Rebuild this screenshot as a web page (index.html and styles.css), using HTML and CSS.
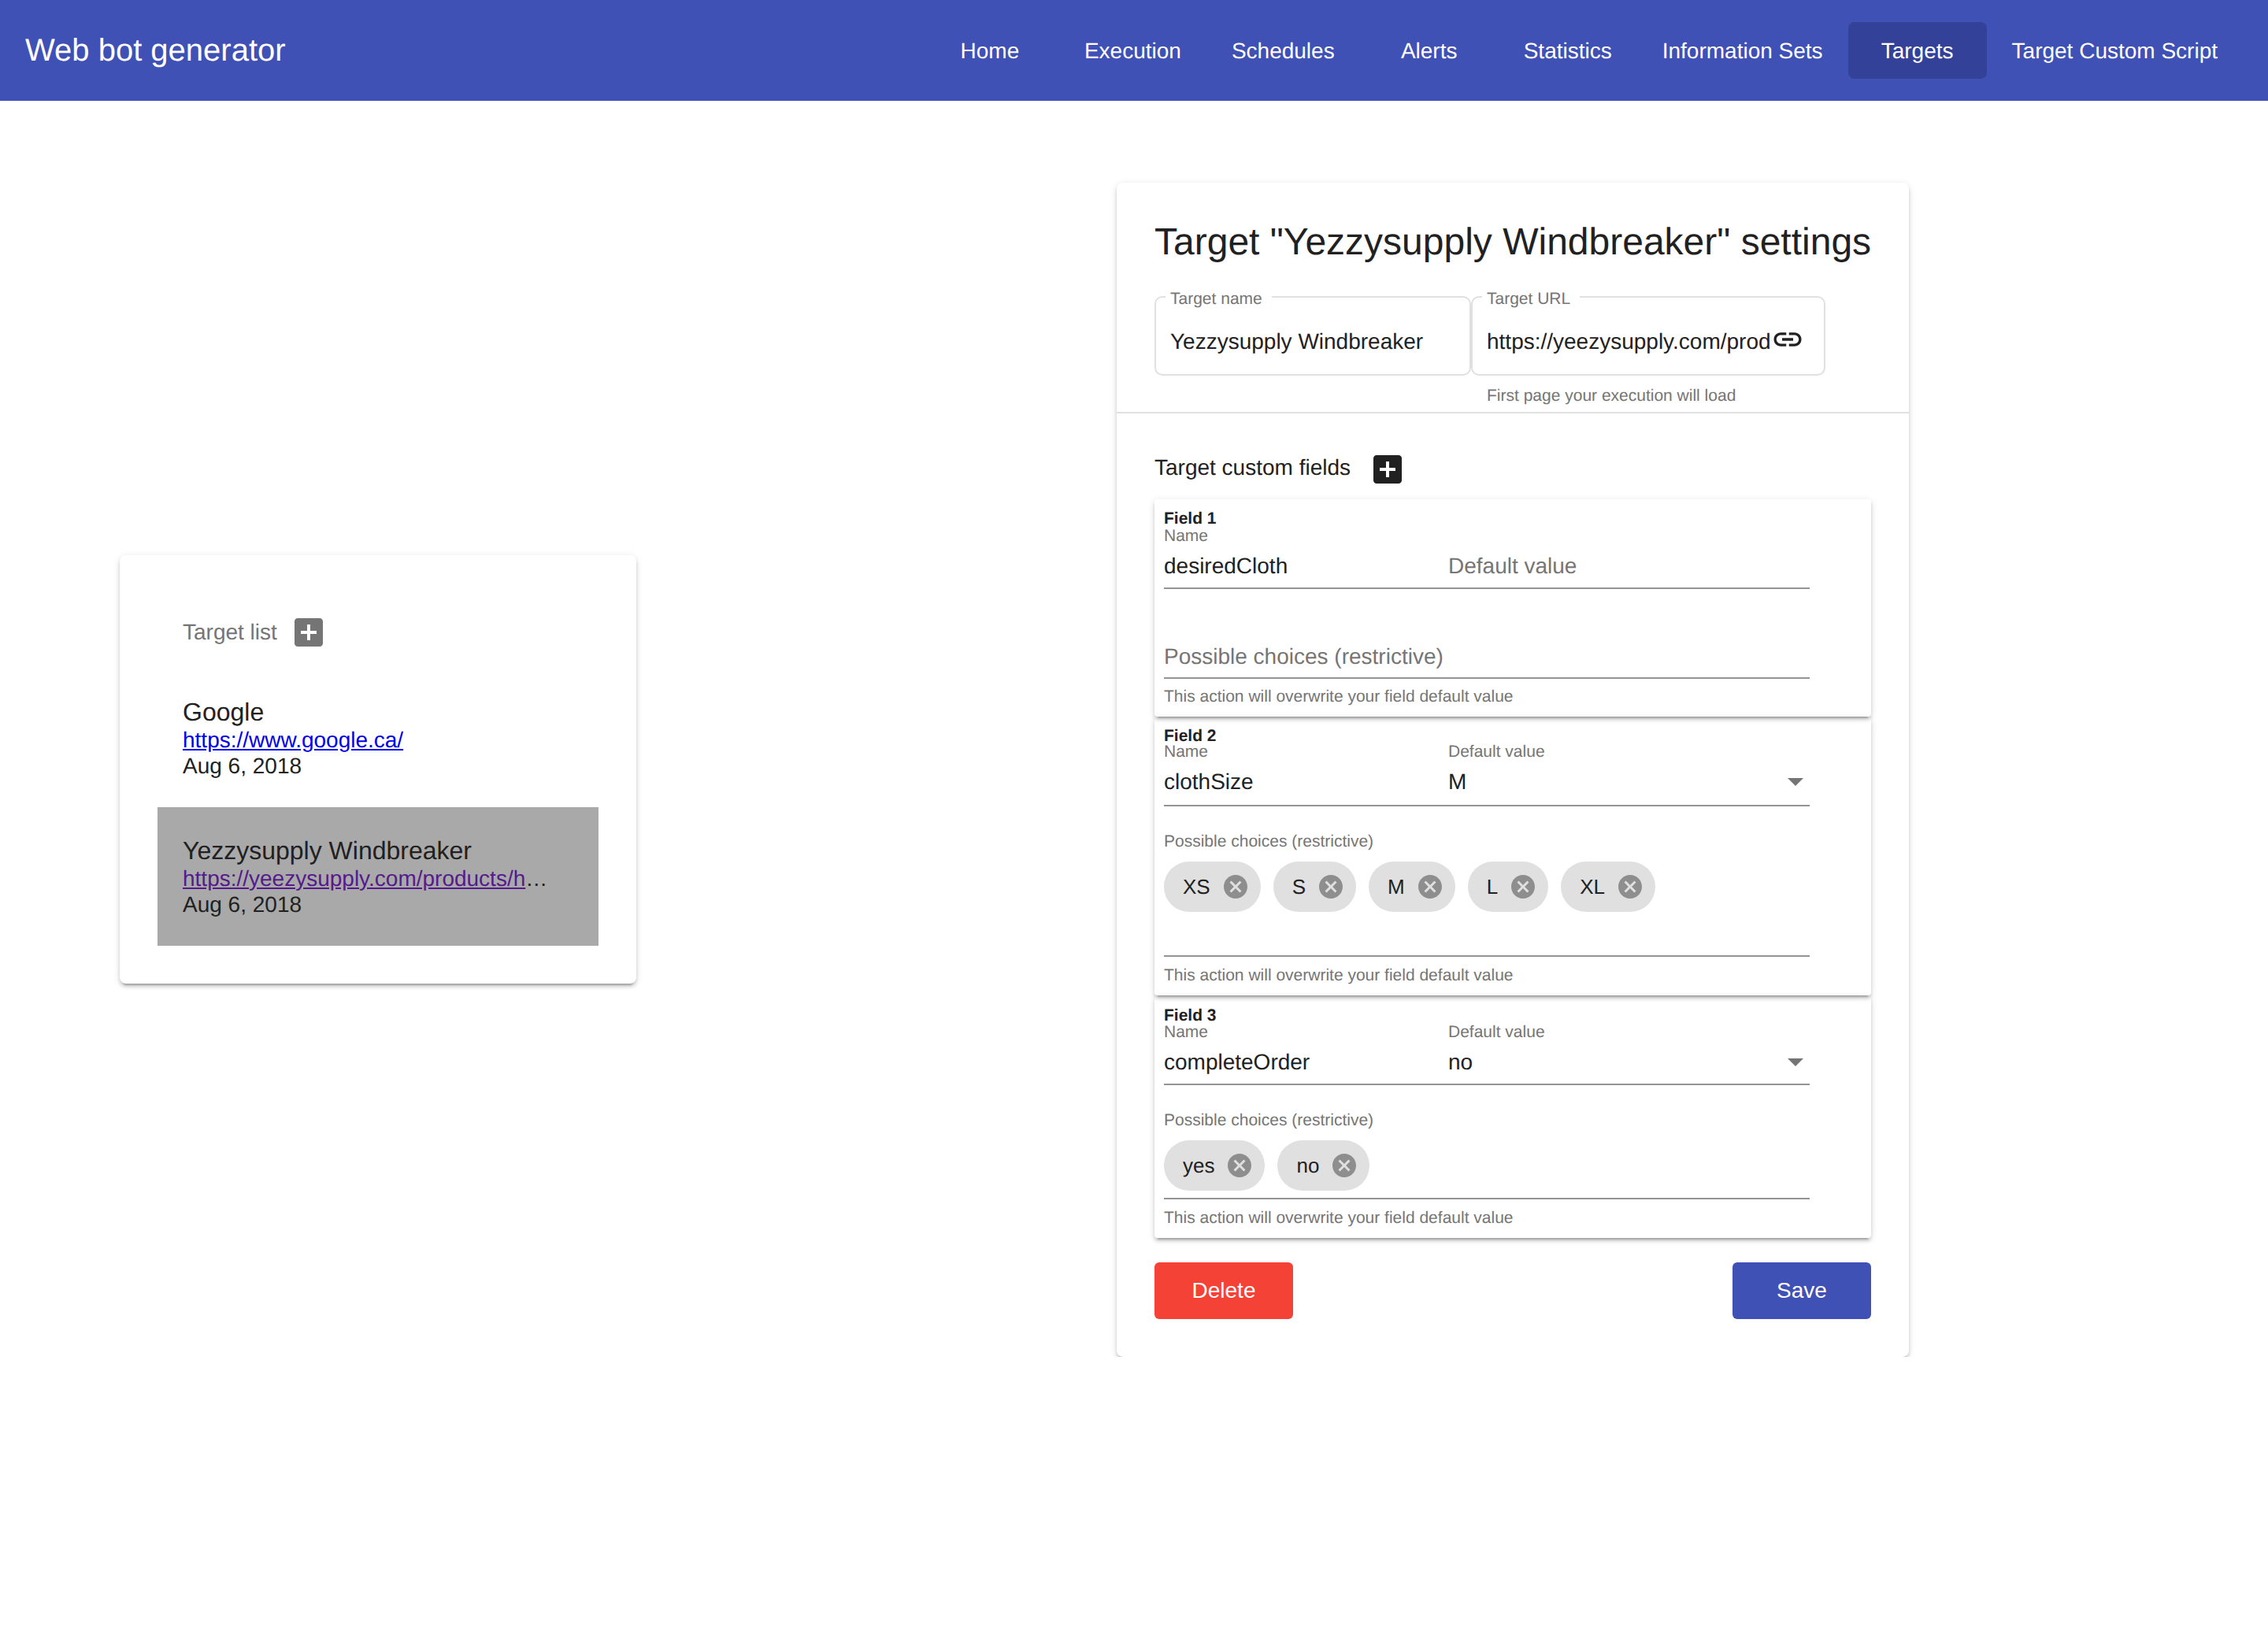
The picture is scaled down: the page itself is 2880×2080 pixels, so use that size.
FILE: index.html
```html
<!DOCTYPE html>
<html>
<head>
	<meta charset="utf-8">
	<title>Web bot generator</title>
	<link rel="stylesheet" href="styles.css">
</head>
<body>

	<header class="toolbar">
		<span class="brand">Web bot generator</span>
		<nav class="nav">
			<a class="nav-btn">Home</a>
			<a class="nav-btn">Execution</a>
			<a class="nav-btn">Schedules</a>
			<a class="nav-btn">Alerts</a>
			<a class="nav-btn">Statistics</a>
			<a class="nav-btn">Information Sets</a>
			<a class="nav-btn active">Targets</a>
			<a class="nav-btn">Target Custom Script</a>
		</nav>
	</header>

	<main class="content">

		<div class="col-list">
			<section class="card list-card">
				<div class="list-head">
					<span class="list-title">Target list</span>
					<svg class="add-icon gray" viewBox="0 0 24 24"><path d="M19 3H5c-1.11 0-2 .9-2 2v14c0 1.1.89 2 2 2h14c1.1 0 2-.9 2-2V5c0-1.1-.9-2-2-2zm-2 10h-4v4h-2v-4H7v-2h4V7h2v4h4v2z"/></svg>
				</div>
				<div class="list-item">
					<div class="item-name">Google</div>
					<div class="item-line"><a class="link" href="#">https://www.google.ca/</a></div>
					<div class="item-date">Aug 6, 2018</div>
				</div>
				<div class="list-item selected">
					<div class="item-name">Yezzysupply Windbreaker</div>
					<div class="item-line"><a class="link visited" href="#">https://yeezysupply.com/products/hooded-windbreaker</a></div>
					<div class="item-date">Aug 6, 2018</div>
				</div>
			</section>
		</div>

		<div class="col-settings">
			<section class="card settings-card">
				<h1 class="settings-title">Target "Yezzysupply Windbreaker" settings</h1>

				<div class="outline-row">
					<div class="outline-wrap name-wrap">
						<div class="outline">
							<label class="outline-label">Target name</label>
							<div class="outline-value">Yezzysupply Windbreaker</div>
						</div>
					</div>
					<div class="outline-wrap url-wrap">
						<div class="outline">
							<label class="outline-label">Target URL</label>
							<div class="outline-value url-value">https://yeezysupply.com/products/hooded-windbreaker</div>
							<svg class="link-icon" viewBox="0 0 24 24"><path d="M3.9 12c0-1.71 1.39-3.1 3.1-3.1h4V7H7c-2.76 0-5 2.24-5 5s2.24 5 5 5h4v-1.9H7c-1.71 0-3.1-1.39-3.1-3.1zM8 13h8v-2H8v2zm9-6h-4v1.9h4c1.71 0 3.1 1.39 3.1 3.1s-1.39 3.1-3.1 3.1h-4V17h4c2.76 0 5-2.24 5-5s-2.24-5-5-5z"/></svg>
						</div>
						<div class="outline-hint">First page your execution will load</div>
					</div>
				</div>

				<hr class="divider">

				<div class="fields-head">
					<span class="fields-title">Target custom fields</span>
					<svg class="add-icon" viewBox="0 0 24 24"><path d="M19 3H5c-1.11 0-2 .9-2 2v14c0 1.1.89 2 2 2h14c1.1 0 2-.9 2-2V5c0-1.1-.9-2-2-2zm-2 10h-4v4h-2v-4H7v-2h4V7h2v4h4v2z"/></svg>
				</div>

				<div class="field field-first">
					<div class="field-title">Field 1</div>
					<div class="field-row">
						<div class="col-name">
							<div class="small-label">Name</div>
							<div class="value">desiredCloth</div>
						</div>
						<div class="col-default">
							<div class="small-label"></div>
							<div class="value placeholder">Default value</div>
						</div>
					</div>
					<div class="choices-empty placeholder">Possible choices (restrictive)</div>
					<div class="hint">This action will overwrite your field default value</div>
				</div>

				<div class="field">
					<div class="field-title">Field 2</div>
					<div class="field-row">
						<div class="col-name">
							<div class="small-label">Name</div>
							<div class="value">clothSize</div>
						</div>
						<div class="col-default">
							<div class="small-label">Default value</div>
							<div class="value select">M<span class="arrow"></span></div>
						</div>
					</div>
					<div class="choices-label">Possible choices (restrictive)</div>
					<div class="chips tall">
						<span class="chip">XS<svg class="chip-x" viewBox="0 0 24 24"><path d="M12 2C6.47 2 2 6.47 2 12s4.47 10 10 10 10-4.47 10-10S17.53 2 12 2zm5 13.59L15.59 17 12 13.41 8.41 17 7 15.59 10.59 12 7 8.41 8.41 7 12 10.59 15.59 7 17 8.41 13.41 12 17 15.59z"/></svg></span>
						<span class="chip">S<svg class="chip-x" viewBox="0 0 24 24"><path d="M12 2C6.47 2 2 6.47 2 12s4.47 10 10 10 10-4.47 10-10S17.53 2 12 2zm5 13.59L15.59 17 12 13.41 8.41 17 7 15.59 10.59 12 7 8.41 8.41 7 12 10.59 15.59 7 17 8.41 13.41 12 17 15.59z"/></svg></span>
						<span class="chip">M<svg class="chip-x" viewBox="0 0 24 24"><path d="M12 2C6.47 2 2 6.47 2 12s4.47 10 10 10 10-4.47 10-10S17.53 2 12 2zm5 13.59L15.59 17 12 13.41 8.41 17 7 15.59 10.59 12 7 8.41 8.41 7 12 10.59 15.59 7 17 8.41 13.41 12 17 15.59z"/></svg></span>
						<span class="chip">L<svg class="chip-x" viewBox="0 0 24 24"><path d="M12 2C6.47 2 2 6.47 2 12s4.47 10 10 10 10-4.47 10-10S17.53 2 12 2zm5 13.59L15.59 17 12 13.41 8.41 17 7 15.59 10.59 12 7 8.41 8.41 7 12 10.59 15.59 7 17 8.41 13.41 12 17 15.59z"/></svg></span>
						<span class="chip">XL<svg class="chip-x" viewBox="0 0 24 24"><path d="M12 2C6.47 2 2 6.47 2 12s4.47 10 10 10 10-4.47 10-10S17.53 2 12 2zm5 13.59L15.59 17 12 13.41 8.41 17 7 15.59 10.59 12 7 8.41 8.41 7 12 10.59 15.59 7 17 8.41 13.41 12 17 15.59z"/></svg></span>
					</div>
					<div class="hint">This action will overwrite your field default value</div>
				</div>

				<div class="field field-last">
					<div class="field-title">Field 3</div>
					<div class="field-row">
						<div class="col-name">
							<div class="small-label">Name</div>
							<div class="value">completeOrder</div>
						</div>
						<div class="col-default">
							<div class="small-label">Default value</div>
							<div class="value select">no<span class="arrow"></span></div>
						</div>
					</div>
					<div class="choices-label">Possible choices (restrictive)</div>
					<div class="chips">
						<span class="chip">yes<svg class="chip-x" viewBox="0 0 24 24"><path d="M12 2C6.47 2 2 6.47 2 12s4.47 10 10 10 10-4.47 10-10S17.53 2 12 2zm5 13.59L15.59 17 12 13.41 8.41 17 7 15.59 10.59 12 7 8.41 8.41 7 12 10.59 15.59 7 17 8.41 13.41 12 17 15.59z"/></svg></span>
						<span class="chip">no<svg class="chip-x" viewBox="0 0 24 24"><path d="M12 2C6.47 2 2 6.47 2 12s4.47 10 10 10 10-4.47 10-10S17.53 2 12 2zm5 13.59L15.59 17 12 13.41 8.41 17 7 15.59 10.59 12 7 8.41 8.41 7 12 10.59 15.59 7 17 8.41 13.41 12 17 15.59z"/></svg></span>
					</div>
					<div class="hint">This action will overwrite your field default value</div>
				</div>

				<div class="actions">
					<button class="btn btn-delete">Delete</button>
					<button class="btn btn-save">Save</button>
				</div>
			</section>
		</div>

	</main>

</body>
</html>
```

FILE: styles.css
```css
* {
	box-sizing: border-box;
}

body {
	margin: 0;
	background-color: #fff;
	color: #212121;
	font-family: "Liberation Sans", Arial, sans-serif;
	font-size: 28px;
	text-rendering: geometricPrecision;
}

/* toolbar */
.toolbar {
	display: flex;
	align-items: center;
	justify-content: space-between;
	height: 128px;
	padding: 0 32px;
	background-color: #3f51b5;
	color: #fff;
}

.brand {
	padding-top: 1px;
	font-size: 40px;
}

.nav {
	display: flex;
}

.nav-btn {
	min-width: 176px;
	height: 72px;
	padding: 0 32px;
	border-radius: 8px;
	font-size: 28px;
	line-height: 74px;
	text-align: center;
	white-space: nowrap;
}

.nav-btn.active {
	background-color: #344198;
}

/* page columns */
.content {
	display: grid;
	grid-template-columns: 1fr 2fr;
	align-items: center;
	padding-top: 104px;
}

.col-list,
.col-settings {
	display: flex;
	justify-content: center;
}

.col-list {
	padding-bottom: 2px;
}

.col-settings {
	padding-left: 2px;
}

.card {
	background-color: #fff;
	border-radius: 8px;
	padding: 48px;
	box-shadow: 0 6px 2px -4px rgba(0, 0, 0, .2), 0 4px 4px 0 rgba(0, 0, 0, .14), 0 2px 10px 0 rgba(0, 0, 0, .12);
}

/* target list */
.list-card {
	width: 656px;
}

.list-head {
	display: flex;
	align-items: center;
	gap: 16px;
	height: 96px;
	padding: 5px 0 0 32px;
}

.list-title {
	color: #757575;
}

.add-icon {
	width: 48px;
	height: 48px;
	fill: #212121;
}

.add-icon.gray {
	fill: #757575;
}

.list-item {
	display: flex;
	flex-direction: column;
	justify-content: center;
	height: 176px;
	padding: 0 32px;
}

.list-item.selected {
	background-color: #a9a9a9;
}

.item-name {
	font-size: 32px;
	line-height: 38px;
}

.item-line {
	max-width: 470px;
	line-height: 34px;
	overflow: hidden;
	white-space: nowrap;
	text-overflow: ellipsis;
}

.item-date {
	line-height: 32px;
}

.link {
	color: #0000ee;
}

.link.visited {
	color: #551a8b;
}

/* settings */
.settings-card {
	width: 1006px;
}

.settings-title {
	margin: 0 0 40px;
	font-size: 48px;
	font-weight: normal;
	line-height: 56px;
	white-space: nowrap;
}

.outline-row {
	display: flex;
}

.name-wrap {
	width: 402px;
}

.url-wrap {
	width: 450px;
}

.outline {
	position: relative;
	display: flex;
	height: 101px;
	padding: 40px 18px 0;
	border: 2px solid #e0e0e0;
	border-radius: 10px;
}

.outline-label {
	position: absolute;
	left: 12px;
	top: -10px;
	padding: 0 12px 0 6px;
	background-color: #fff;
	color: #757575;
	font-size: 21px;
	line-height: 24px;
}

.outline-value {
	line-height: 32px;
	white-space: nowrap;
	overflow: hidden;
}

.url-value {
	width: 360px;
	flex: none;
}

.link-icon {
	width: 42px;
	height: 42px;
	flex: none;
	margin-left: 1px;
	margin-top: -8px;
	fill: #212121;
}

.outline-hint {
	margin-top: 15px;
	padding-left: 20px;
	color: #757575;
	font-size: 21px;
	line-height: 22px;
}

.divider {
	height: 2px;
	margin: 9px -48px 0;
	border: 0;
	background-color: #e0e0e0;
}

.fields-head {
	display: flex;
	align-items: center;
	gap: 23px;
	height: 48px;
	margin: 47px 0 14px;
}

.fields-title {
	padding-bottom: 4px;
}

/* field cards */
.field {
	margin-bottom: 1px;
	padding: 14px 12px;
	border-radius: 4px;
	box-shadow: 0 6px 2px -4px rgba(0, 0, 0, .2), 0 4px 4px 0 rgba(0, 0, 0, .14), 0 2px 10px 0 rgba(0, 0, 0, .12);
}

.field-title {
	font-size: 21px;
	font-weight: bold;
	line-height: 20px;
}

.field-row {
	display: flex;
	width: 820px;
	height: 79px;
	border-bottom: 2px solid #949494;
}

.col-name {
	width: 361px;
}

.col-default {
	flex: 1;
}

.small-label {
	min-height: 20px;
	color: #757575;
	font-size: 21px;
	line-height: 20px;
}

.value {
	margin-top: 12px;
	line-height: 32px;
}

.field-first .field-title {
	line-height: 22px;
}

.field-first .field-row {
	height: 78px;
}

.field-first .small-label {
	min-height: 22px;
	line-height: 22px;
}

.field-first .value {
	margin-top: 11px;
}

.field-first .hint {
	margin-top: 12px;
}

.field-last .field-title,
.field-last .small-label {
	line-height: 21px;
}

.field-last .field-row {
	height: 78px;
}

.placeholder {
	color: #757575;
}

.select {
	display: flex;
	align-items: center;
	justify-content: space-between;
	padding-right: 8px;
}

.arrow {
	width: 0;
	height: 0;
	border-left: 10px solid transparent;
	border-right: 10px solid transparent;
	border-top: 10px solid #757575;
}

.choices-empty {
	width: 820px;
	margin-top: 70px;
	padding-bottom: 10px;
	line-height: 32px;
	border-bottom: 2px solid #949494;
}

.choices-label {
	margin-top: 34px;
	color: #757575;
	font-size: 21px;
	line-height: 22px;
}

.chips {
	display: flex;
	gap: 16px;
	width: 820px;
	margin-top: 14px;
	padding-bottom: 9px;
	border-bottom: 2px solid #949494;
}

.chips.tall {
	padding-bottom: 55px;
}

.chip {
	display: flex;
	align-items: center;
	height: 64px;
	padding: 0 14px 0 24px;
	border-radius: 32px;
	background-color: #e0e0e0;
	font-size: 26px;
}

.chip-x {
	width: 36px;
	height: 36px;
	margin-left: 14px;
	fill: #8e8e8e;
}

.hint {
	margin-top: 13px;
	color: #757575;
	font-size: 21px;
	line-height: 22px;
}

.actions {
	display: flex;
	justify-content: space-between;
	margin-top: 31px;
}

.btn {
	width: 176px;
	height: 72px;
	border: 0;
	border-radius: 6px;
	color: #fff;
	font-family: inherit;
	font-size: 28px;
}

.btn-delete {
	background-color: #f44336;
}

.btn-save {
	background-color: #3f51b5;
}
```
